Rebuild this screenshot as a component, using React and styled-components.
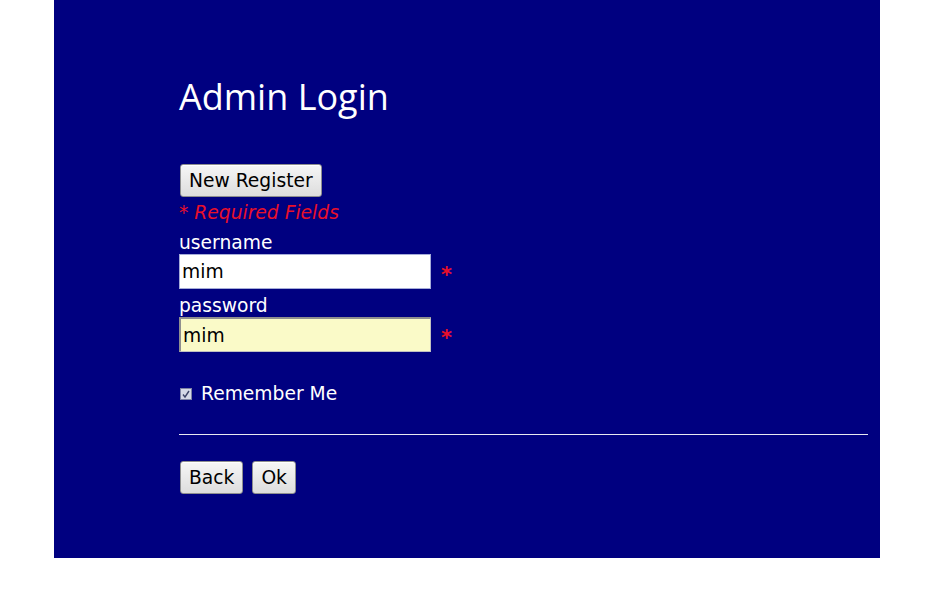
import styled, { createGlobalStyle } from 'styled-components'

const GlobalStyle = createGlobalStyle`
  html, body {
    margin: 0;
    padding: 0;
    background: #ffffff;
  }
  body {
    font-family: "DejaVu Sans", Verdana, sans-serif;
  }
`

const Page = styled.div`
  width: 937px;
  height: 602px;
  padding-left: 54px;
  box-sizing: border-box;
`

const Panel = styled.div`
  width: 826px;
  height: 558px;
  background: #000080;
  box-sizing: border-box;
  padding: 74px 12px 0 125px;
  display: flex;
  flex-direction: column;
  align-items: flex-start;
`

const Title = styled.h1`
  margin: 0 0 44px;
  font-family: "Open Sans", "Noto Sans", sans-serif;
  font-weight: 400;
  font-size: 36px;
  line-height: 46px;
  color: #ffffff;
`

const Button = styled.button`
  font-family: "DejaVu Sans", Verdana, sans-serif;
  font-size: 18.7px;
  line-height: 20px;
  color: #000000;
  height: 33px;
  padding: 0 8px;
  margin: 0 1px;
  background: linear-gradient(#f6f6f6, #dddddd);
  border: 1px solid #8e8f8f;
  border-radius: 3px;
  box-shadow: inset 0 1px 0 #ffffff;
`

const Required = styled.div`
  font-size: 18.7px;
  line-height: 22px;
  font-style: italic;
  color: #e8102a;
  margin-top: 5px;
`

const Label = styled.label`
  display: block;
  font-size: 18.7px;
  line-height: 22px;
  color: #ffffff;
  margin-top: ${(p) => p.$top || 0}px;
`

const FieldRow = styled.div`
  display: flex;
  align-items: center;
  gap: 10px;
`

const Input = styled.input`
  width: 252px;
  height: 35px;
  box-sizing: border-box;
  font-family: "DejaVu Sans", Verdana, sans-serif;
  font-size: 18.7px;
  color: #000000;
  padding: 0 2px;
  margin: 0;
  background: ${(p) => (p.$filled ? '#fafac8' : '#ffffff')};
  border: 1px solid #a5acd8;
  ${(p) =>
    p.$filled &&
    `
    border-top: 2px solid #8f8f8f;
    border-left: 2px solid #8f8f8f;
    border-right: 1px solid #c0c0c0;
    border-bottom: 1px solid #c0c0c0;
  `}
  outline: none;
`

const Star = styled.span`
  color: #e8102a;
  font-size: 21px;
  font-weight: 700;
  line-height: 20px;
  padding-top: 6px;
`

const CheckRow = styled.label`
  display: flex;
  align-items: center;
  gap: 9px;
  margin-top: 31px;
  font-size: 18.7px;
  line-height: 22px;
  color: #ffffff;
`

const Box = styled.span`
  width: 12px;
  height: 12px;
  margin-left: 1px;
  box-sizing: border-box;
  border: 1px solid #7d82a3;
  background: #d5d8e6;
  display: flex;
  align-items: center;
  justify-content: center;
`

const Rule = styled.hr`
  align-self: stretch;
  margin: 29px 0 26px;
  border: 0;
  height: 1px;
  background: #e8e8f0;
`

const Actions = styled.div`
  display: flex;
  gap: 7px;
`

export default function App() {
  return (
    <>
      <GlobalStyle />
      <Page>
        <Panel>
          <Title>Admin Login</Title>
          <Button>New Register</Button>
          <Required>* Required Fields</Required>
          <Label $top={8}>username</Label>
          <FieldRow>
            <Input defaultValue="mim" />
            <Star>*</Star>
          </FieldRow>
          <Label $top={6}>password</Label>
          <FieldRow>
            <Input defaultValue="mim" $filled />
            <Star>*</Star>
          </FieldRow>
          <CheckRow>
            <Box>
              <svg width="10" height="10" viewBox="0 0 10 10">
                <path d="M2 5.5 L4 8 L8 2" fill="none" stroke="#3c4266" strokeWidth="1.4" />
              </svg>
            </Box>
            Remember Me
          </CheckRow>
          <Rule />
          <Actions>
            <Button>Back</Button>
            <Button>Ok</Button>
          </Actions>
        </Panel>
      </Page>
    </>
  )
}
